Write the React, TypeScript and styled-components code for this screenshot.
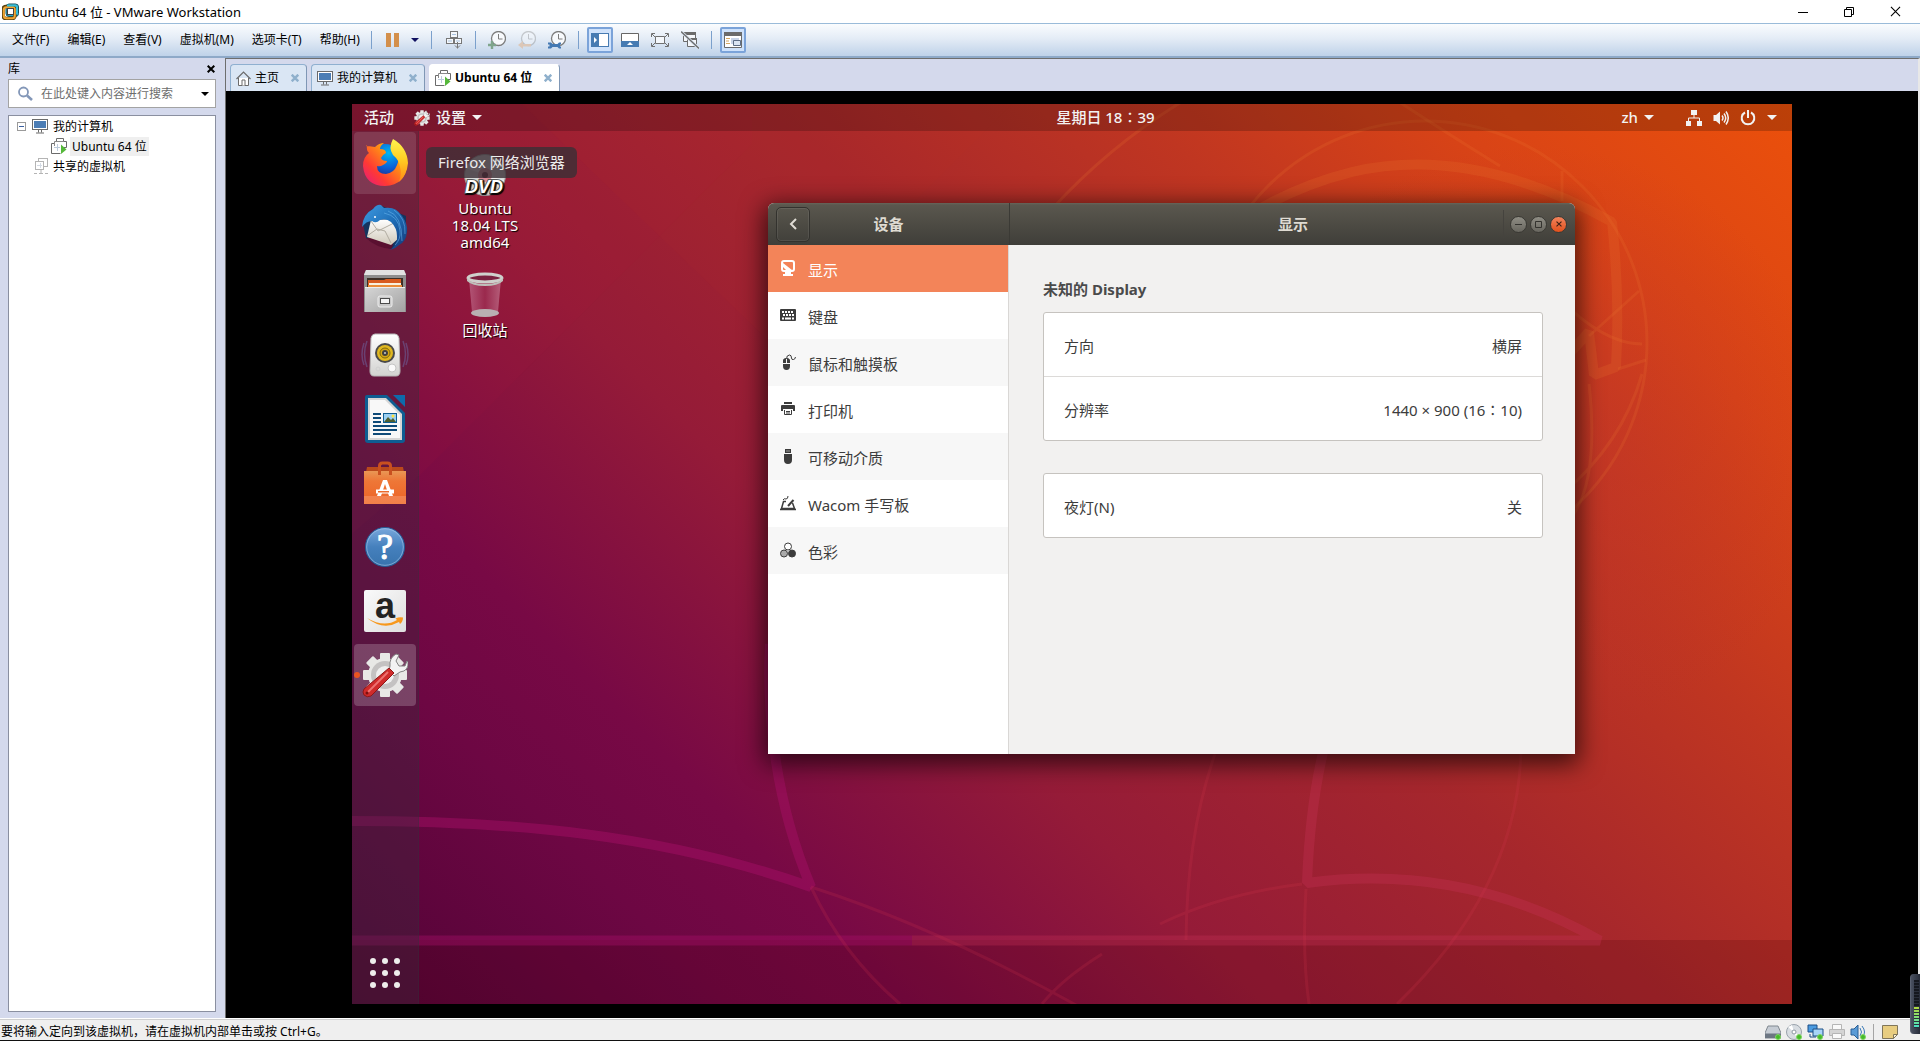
import React from 'react';
import styled, { createGlobalStyle, css } from 'styled-components';

const hostFont = '"Noto Sans", "Noto Sans CJK SC", sans-serif';
const guestFont = '"Noto Sans", "Noto Sans CJK SC", sans-serif';

const GlobalStyle = createGlobalStyle`
  *, *::before, *::after { box-sizing: border-box; }
  body { margin: 0; background: #000; }
  button, input { font: inherit; color: inherit; margin: 0; }
  button { padding: 0; border: 0; background: none; cursor: default; }
  h1, h2, h3, p { margin: 0; font-weight: inherit; font-size: inherit; }
  svg { display: block; flex: none; }
`;

/* ---------- Host application ---------- */

const Shell = styled.div`
  display: flex;
  flex-direction: column;
  height: 100vh;
  min-height: 640px;
  border-bottom: 1px solid #111;
  background: #d4d9ec;
  color: #000;
  font: 12px/16px ${hostFont};
`;

const TitleBar = styled.header`
  display: flex;
  align-items: center;
  flex: none;
  height: 23px;
  padding: 0 2px;
  gap: 3px;
  background: #fff;
`;

const AppTitle = styled.h1`
  flex: 1;
  font-size: 13px;
`;

const CaptionButtons = styled.div`
  display: flex;
`;

const CaptionButton = styled.button`
  display: grid;
  place-items: center;
  width: 46px;
  height: 20px;
`;

const MenuBar = styled.div`
  display: flex;
  align-items: center;
  flex: none;
  height: 35px;
  padding-left: 3px;
  border-top: 1px solid #9abbd9;
  border-bottom: 2px solid #8ea9c8;
  background: linear-gradient(#fafcfe, #e4ecf6 45%, #bfd2e9);
`;

const MenuItem = styled.button`
  padding: 0 9px;
  line-height: 20px;
`;

const ToolSeparator = styled.span<{ $lead?: number; $trail?: number }>`
  width: 1px;
  height: 18px;
  margin: 0 ${p => p.$trail ?? 6}px 0 ${p => p.$lead ?? 6}px;
  background: #7ba0cc;
`;

const ToolButton = styled.button<{ $active?: boolean }>`
  display: grid;
  place-items: center;
  width: 26px;
  height: 26px;
  margin: 0 2px;
  border: 2px solid ${p => (p.$active ? '#7ba3d9' : 'transparent')};
  border-radius: 2px;
  background: ${p => (p.$active ? '#cfe2fb' : 'transparent')};
`;

const NarrowTool = styled(ToolButton)`
  width: 14px;
  margin: 0;
`;

const Workspace = styled.div`
  display: flex;
  flex: 1;
  min-height: 0;
`;

const Library = styled.aside`
  display: flex;
  flex-direction: column;
  flex: none;
  width: 225px;
  padding: 0 9px 6px 8px;
`;

const LibraryHead = styled.div`
  display: flex;
  align-items: center;
  justify-content: space-between;
  height: 21px;
`;

const SmallButton = styled.button`
  display: grid;
  place-items: center;
  width: 10px;
  height: 16px;
`;

const SearchField = styled.div`
  display: flex;
  align-items: center;
  flex: none;
  height: 29px;
  padding: 0 5px 0 8px;
  border: 1px solid #a3a3a3;
  background: #fff;
`;

const SearchInput = styled.input`
  flex: 1;
  min-width: 0;
  padding: 0 0 0 8px;
  border: 0;
  outline: 0;
  background: none;
  &::placeholder { color: #6d6d6d; opacity: 1; }
`;

const Tree = styled.ul`
  flex: 1;
  margin: 7px 0 0;
  padding: 0;
  list-style: none;
  border: 1px solid #8a8fa0;
  background: #fff;
`;

const TreeRow = styled.li<{ $indent: number }>`
  display: flex;
  align-items: center;
  height: 20px;
  padding-left: ${p => p.$indent}px;
  gap: 3px;
`;

const TreeLabel = styled.button<{ $selected?: boolean }>`
  padding: 0 2px;
  line-height: 19px;
  background: ${p => (p.$selected ? '#efefef' : 'transparent')};
`;

const Expander = styled.button`
  display: grid;
  place-items: center;
  width: 9px;
  height: 9px;
  margin-right: 3px;
  border: 1px solid #9a9a9a;
  background: #fff;
`;

const Main = styled.main`
  display: flex;
  flex-direction: column;
  flex: 1;
  min-width: 0;
  border-left: 1px solid #6e6e6e;
  border-top: 1px solid #6e6e6e;
  border-right: 2px solid #e8e8e8;
`;

const Tabs = styled.div`
  display: flex;
  align-items: flex-end;
  flex: none;
  height: 32px;
  padding-left: 4px;
  gap: 4px;
`;

const Tab = styled.div<{ $active?: boolean }>`
  display: flex;
  align-items: center;
  height: 27px;
  padding: 0 6px 0 5px;
  gap: 11px;
  border: 1px solid ${p => (p.$active ? '#fff' : '#8fb0d0')};
  border-right-color: #7f97b5;
  border-bottom: 0;
  border-radius: 4px 4px 0 0;
  background: ${p => (p.$active ? '#fff' : '#dae6f4')};
  font-weight: ${p => (p.$active ? 700 : 400)};
`;

const TabLabel = styled.button`
  display: flex;
  align-items: center;
  gap: 4px;
`;

const Stage = styled.div`
  display: grid;
  place-items: center;
  flex: 1;
  min-height: 0;
  padding-bottom: 1px;
  overflow: hidden;
  background: #000;
`;

const StatusBar = styled.footer`
  position: relative;
  display: flex;
  align-items: center;
  flex: none;
  height: 22px;
  padding: 4px 22px 0 1px;
  border-top: 1px solid #fff;
  background: #efefef;
  box-shadow: inset 0 1px #cfcfcf;
`;

const StatusText = styled.p`
  flex: 1;
`;

const StatusIcons = styled.div`
  display: flex;
  align-items: center;
  gap: 5px;
`;

const StatusRule = styled.span`
  width: 1px;
  height: 16px;
  margin: 0 3px 0 2px;
  background: #a5a5a5;
`;

const Meter = styled.div`
  position: absolute;
  right: 0;
  bottom: 6px;
  display: flex;
  justify-content: flex-end;
  align-items: flex-end;
  width: 10px;
  height: 60px;
  padding: 0 1px 6px;
  border-radius: 4px 0 0 4px;
  border-left: 1px solid #596070;
  background: linear-gradient(90deg, #4a5161, #272c39);
`;

const MeterScale = styled.span`
  width: 5px;
  height: 48px;
  background:
    repeating-linear-gradient(transparent 0 2px, #2a2f3b 2px 3px),
    linear-gradient(#15181f 26px, #b5d83a 26px, #7ee07a 38px, #41e0d0);
`;

/* ---------- Guest desktop ---------- */

const Desktop = styled.section`
  position: relative;
  isolation: isolate;
  display: flex;
  flex-direction: column;
  width: 100%;
  max-width: 1440px;
  aspect-ratio: 16 / 10;
  overflow: hidden;
  color: #fff;
  font: 15px/17px ${guestFont};
`;

const WallpaperArt = styled.svg`
  position: absolute;
  inset: 0;
  z-index: -1;
  width: 100%;
  height: 100%;
`;

const Panel = styled.div`
  display: grid;
  grid-template-columns: 1fr auto 1fr;
  align-items: center;
  flex: none;
  height: 27px;
  padding: 0 15px 0 12px;
  background: rgba(0, 0, 0, 0.2);
  color: #f2f2f2;
  font-weight: 500;
`;

const PanelGroup = styled.div<{ $end?: boolean }>`
  display: flex;
  align-items: center;
  justify-content: ${p => (p.$end ? 'flex-end' : 'flex-start')};
  gap: ${p => (p.$end ? 32 : 20)}px;
`;

const PanelButton = styled.button<{ $gap?: number }>`
  display: flex;
  align-items: center;
  gap: ${p => p.$gap ?? 6}px;
`;

const Clock = styled.button`
  padding-left: 70px;
`;

const DesktopBody = styled.div`
  display: flex;
  flex: 1;
  min-height: 0;
`;

const Dock = styled.nav`
  display: flex;
  flex-direction: column;
  flex: none;
  width: 67px;
  padding: 1px 3px 0 2px;
  gap: 2px;
  border-right: 1px solid rgba(40, 60, 60, 0.25);
  background: rgba(60, 40, 60, 0.4);
`;

const DockItem = styled.button<{ $lit?: number; $last?: boolean }>`
  position: relative;
  display: grid;
  place-items: center;
  flex: none;
  width: 62px;
  height: 62px;
  border-radius: 4px;
  background: rgba(255, 255, 255, ${p => p.$lit ?? 0});
  ${p => p.$last && css`margin-top: auto;`}
`;

const RunningDot = styled.span`
  position: absolute;
  left: 0;
  top: 28px;
  width: 6px;
  height: 6px;
  border-radius: 50%;
  background: #e95420;
`;

const Canvas = styled.div`
  position: relative;
  flex: 1;
`;

const IconColumn = styled.ul`
  display: flex;
  flex-direction: column;
  align-items: center;
  width: 132px;
  margin: 0;
  padding: 23px 0 0;
  gap: 21px;
  list-style: none;
`;

const DesktopIcon = styled.button`
  display: flex;
  flex-direction: column;
  align-items: center;
  width: 72px;
  gap: 4px;
  text-shadow: 1px 1px 1px #000;
`;

const Tooltip = styled.div`
  position: absolute;
  left: 7px;
  top: 16px;
  padding: 7px 12px;
  border-radius: 6px;
  background: rgba(58, 48, 54, 0.8);
  color: #ececec;
`;

const Window = styled.div`
  position: absolute;
  left: 349px;
  top: 72px;
  display: grid;
  grid-template-columns: 241px 1fr;
  grid-template-rows: 42px 1fr;
  width: 807px;
  height: 551px;
  overflow: hidden;
  border-radius: 6px 6px 0 0;
  background: #f2f1f0;
  color: #3c3c3c;
`;

const WindowShadow = styled.div`
  position: absolute;
  left: 349px;
  top: 72px;
  width: 807px;
  height: 551px;
  border-radius: 6px 6px 0 0;
  box-shadow: 0 6px 24px 4px rgba(0, 0, 0, 0.65);
`;

const HeadBar = styled.header`
  display: grid;
  grid-template-columns: 64px 1fr 64px;
  align-items: center;
  padding: 0 8px;
  background: linear-gradient(#67645a, #5a574e 2px, #3f3e39);
  color: #dfdbd2;
  font-weight: 700;
  text-align: center;
  & + & {
    padding-left: 9px;
    border-left: 1px solid #3b3a35;
  }
`;

const BackButton = styled.button`
  display: grid;
  place-items: center;
  width: 34px;
  height: 35px;
  border: 1px solid #33322e;
  border-radius: 5px;
  box-shadow: inset 0 0 0 1px rgba(255, 255, 255, 0.08);
`;

const HeadTitle = styled.h2`
  grid-column: 2;
  font-weight: 700;
`;

const Controls = styled.div`
  display: flex;
  align-items: center;
  justify-content: flex-end;
  gap: 3px;
  height: 28px;
  border-left: 1px solid #45433e;
`;

const RoundButton = styled.button<{ $close?: boolean }>`
  display: grid;
  place-items: center;
  width: 17px;
  height: 17px;
  border: 1px solid #3a3934;
  border-radius: 50%;
  background: ${p => (p.$close ? 'linear-gradient(#f2835c, #e2501c)' : 'linear-gradient(#8f8d84, #68665f)')};
`;

const SideList = styled.nav`
  display: flex;
  flex-direction: column;
  border-right: 1px solid #d9d7d5;
  background: #fff;
`;

const SideItem = styled.button<{ $active?: boolean }>`
  display: flex;
  align-items: center;
  height: 47px;
  padding: 3px 12px 0;
  gap: 12px;
  background: #fff;
  &:nth-child(odd) { background: #f7f7f7; }
  ${p => p.$active && css`
    &&, &&:nth-child(odd) { background: #f38459; }
    color: #fff;
  `}
  svg { margin-bottom: 4px; }
`;

const Content = styled.div`
  display: flex;
  flex-direction: column;
  padding: 36px 32px 0 34px;
`;

const SectionTitle = styled.h3`
  margin-bottom: 14px;
  font-weight: 700;
  color: #4a4a4a;
`;

const Card = styled.div`
  margin-bottom: 32px;
  border: 1px solid #c6c3bf;
  border-radius: 3px;
  background: #fff;
`;

const CardRow = styled.button`
  display: flex;
  align-items: center;
  justify-content: space-between;
  width: 100%;
  height: 63px;
  padding: 3px 20px 0;
  & + & {
    height: 64px;
    border-top: 1px solid #dcdad8;
  }
`;

/* ---------- Host icons ---------- */

const VmwareLogo = () => (
  <svg width="17" height="17" viewBox="0 0 17 17">
    <rect x="4" y="1" width="12.500" height="12.500" rx="3" fill="#29a9c5" stroke="#17505c" />
    <rect x="1" y="3.500" width="12" height="12" rx="3" fill="none" stroke="#5b4310" strokeWidth="3.600" />
    <rect x="1.800" y="4.200" width="11" height="11" rx="2.500" fill="none" stroke="#f0a531" strokeWidth="2" />
    <path d="M5 2.500h8q2 0 2 2v7" fill="none" stroke="#37bdd8" strokeWidth="2" />
    <rect x="5.500" y="5.500" width="6" height="6" fill="#fff" stroke="#444" />
  </svg>
);

const Caret = ({ w = 8, color = '#000' }: { w?: number; color?: string }) => (
  <svg width={w} height={w / 2} viewBox="0 0 8 4"><path d="M0 0h8L4 4z" fill={color} /></svg>
);

const Cross = ({ size = 8, color = '#000', stroke = 2 }: { size?: number; color?: string; stroke?: number }) => (
  <svg width={size} height={size} viewBox="0 0 8 8"><path d="M.7.7l6.600 6.600M7.300.7L.7 7.300" stroke={color} strokeWidth={stroke} /></svg>
);

const MonitorIcon = () => (
  <svg width="16" height="16" viewBox="0 0 16 16">
    <rect x=".5" y="1.500" width="15" height="10" fill="#fff" stroke="#6b6b6b" />
    <rect x="2" y="3" width="12" height="7" fill="#4b7db5" />
    <path d="M6.500 12v2.500M9.500 12v2.500M4 15h8" stroke="#6b6b6b" />
  </svg>
);

const VmIcon = () => (
  <svg width="16" height="16" viewBox="0 0 16 16" fill="none">
    <path d="M5.500 4V.5h7v3h3v6H13" stroke="#6b6b6b" />
    <path d="M3.500 8V3.500h9" stroke="#8a8a8a" />
    <path d="M3 5.500H.5v10h9" stroke="#6b6b6b" />
    <path d="M3 9.500h6M6.500 6v7" stroke="#bccbdc" />
    <path d="M10 6.500l5.500 5-5.500 4.500z" fill="#55b83a" />
  </svg>
);

const SharedIcon = () => (
  <svg width="14" height="16" viewBox="0 0 14 16" fill="none" stroke="#b4b4b4">
    <rect x="4.500" y=".5" width="9" height="8" />
    <rect x="1.500" y="3.500" width="8" height="8" fill="#fff" />
    <path d="M3 7.500h5M6.500 5v5" stroke="#d3dae4" />
    <path d="M0 15.500h3M5 15.500h4M11 15.500h3M7 12v3" />
  </svg>
);

const HomeIcon = () => (
  <svg width="15" height="15" viewBox="0 0 15 15" fill="#fff" stroke="#6b6b6b">
    <path d="M2.500 7v7.500h10V7" />
    <path d="M.5 8l7-7 7 7" fill="none" strokeWidth="1.200" />
    <path d="M6 14.500V9h3v5.500" />
  </svg>
);

const SearchIcon = () => (
  <svg width="16" height="16" viewBox="0 0 16 16" fill="none" stroke="#8397b8">
    <circle cx="6.500" cy="6" r="4.500" strokeWidth="1.800" />
    <path d="M10 9.500l5 4.500" strokeWidth="2.600" />
  </svg>
);

const PauseIcon = () => (
  <svg width="14" height="14" viewBox="0 0 14 14" fill="#d38f4b"><path d="M0 0h5v14H0zM8 0h5v14H8z" /></svg>
);

const SendKeysIcon = () => (
  <svg width="18" height="18" viewBox="0 0 18 18" fill="#f5f8fc" stroke="#777">
    <rect x="5.500" y=".5" width="7" height="6" /><rect x="1.500" y="7.500" width="7" height="5" /><rect x="9.500" y="7.500" width="7" height="5" />
    <path d="M7 3.500h4M3 10h4M11 10h4" stroke="#a9c3e0" />
    <path d="M12.500 11v6.500M10 14.500l2.500 2.500 2.500-2.500" fill="none" />
  </svg>
);

const SnapshotIcon = ({ kind }: { kind: 'add' | 'back' | 'manage' }) => (
  <svg width="18" height="18" viewBox="0 0 18 18" fill="none">
    <g opacity={kind === 'back' ? 0.35 : 1}>
      <circle cx="10.500" cy="7.500" r="7" fill="#f7f9fc" stroke="#7d7d7d" strokeWidth="1.300" />
      <path d="M10.500 3v5h4" stroke="#7d7d7d" />
    </g>
    {kind === 'add' && <path d="M0 14h8M4 10v8" stroke="#7fa58c" strokeWidth="2.400" />}
    {kind === 'back' && <path d="M0 14l5-4v3h8v2.500H5V18z" fill="#dcc7b8" />}
    {kind === 'manage' && <path d="M0 11.500h3l1.500 1.500h5l1.500-1.500h2v2h-1v2h1v2h-2L9.500 16h-5L3 17.500H0v-2h1.500v-2H0z" fill="#4479b3" />}
  </svg>
);

const LibraryIcon = () => (
  <svg width="18" height="14" viewBox="0 0 18 14">
    <path d="M0 0h18v14H0z" fill="#477bb2" /><path d="M8 1h9v12H8z" fill="#fff" /><path d="M3 4v6l3-3z" fill="#fff" />
  </svg>
);
const ThumbIcon = () => (
  <svg width="18" height="14" viewBox="0 0 18 14">
    <path d="M.5.5h17v13H.5z" fill="#fff" stroke="#666" /><path d="M0 8h18v6H0z" fill="#477bb2" /><path d="M6 12h6l-3-3z" fill="#fff" />
  </svg>
);
const FullscreenIcon = () => (
  <svg width="18" height="14" viewBox="0 0 18 14" fill="none" stroke="#707070">
    <path d="M4.500 3.500h9v7h-9z" fill="#f4f7fb" />
    <path d="M.5 4V.5H4M14 .5h3.500V4M17.500 10v3.500H14M4 13.500H.5V10M1 1l3 3M17 1l-3 3M17 13l-3-3M1 13l3-3" />
  </svg>
);
const UnityIcon = () => (
  <svg width="18" height="18" viewBox="0 0 18 18" fill="none" stroke="#6b6b6b">
    <path d="M2.500 2.500h12v8h-12z" fill="#f5f7fa" /><path d="M2 2.500h13" strokeWidth="3" />
    <path d="M6.500 7.500h9v8h-9z" fill="#f5f7fa" /><path d="M6 8h10" strokeWidth="2" />
    <path d="M0 .5l18 17" stroke="#dce7f4" strokeWidth="3" /><path d="M0 .5l18 17" strokeWidth="1.300" />
  </svg>
);
const ConsoleIcon = () => (
  <svg width="18" height="16" viewBox="0 0 18 16">
    <path d="M.5.5h17v15H.5z" fill="#fff" stroke="#6b6b6b" /><path d="M0 0h18v4H0z" fill="#6b6b6b" />
    <path d="M2 6.500h4M2 9h3M2 11.500h4" stroke="#d9a860" /><path d="M7 6h8v6H7z" fill="#c8d4e8" />
    <path d="M9.500 8.500h7v5h-7z" fill="#dbe5f3" stroke="#5d6d85" />
  </svg>
);

const Led = () => <circle cx="13" cy="13" r="2.500" fill="#45b92a" stroke="#7fd562" />;

const DiskIcon = () => (
  <svg width="16" height="16" viewBox="0 0 16 16">
    <path d="M3 2h10l3 7v5H0V9z" fill="#c6ccd4" stroke="#808890" /><path d="M0 9.500h16V14H0z" fill="#6c7682" /><Led />
  </svg>
);
const DiscIcon = () => (
  <svg width="16" height="16" viewBox="0 0 16 16">
    <circle cx="8" cy="8" r="7.500" fill="#d8dde2" stroke="#9aa3ac" /><path d="M8 8L2 3l4-2zM8 8l6 4-3 3z" fill="#fff" /><circle cx="8" cy="8" r="2" fill="#fff" stroke="#8e98a4" /><Led />
  </svg>
);
const NetIcon = () => (
  <svg width="17" height="16" viewBox="0 0 17 16">
    <path d="M1 1h9v7H1z" fill="#4b9be0" stroke="#1d4f86" /><path d="M6 5h10v7H6z" fill="#a7d4f7" stroke="#1d4f86" /><path d="M3 10v3h6" stroke="#1d4f86" fill="none" /><Led />
  </svg>
);
const PrinterIcon = () => (
  <svg width="16" height="16" viewBox="0 0 16 16" stroke="#b5b5b5">
    <path d="M3.500.5h9v6h-9z" fill="#fafafa" /><path d="M.5 5.500h15v6H.5z" fill="#d4d4d4" /><path d="M3.500 9.500h9v5h-9z" fill="#fafafa" />
  </svg>
);
const SoundIcon = () => (
  <svg width="16" height="16" viewBox="0 0 16 16" fill="none">
    <path d="M1 5h3l4-4v14l-4-4H1z" fill="#5a9bd6" stroke="#2a5f95" /><path d="M10 4q3 4 0 8M12 2q5 6 0 12" stroke="#3b7ab6" /><Led />
  </svg>
);
const NoteIcon = () => (
  <svg width="16" height="14" viewBox="0 0 16 14"><path d="M.5.5h15v9l-4 4H.5z" fill="#e8cd80" stroke="#80765a" /><path d="M11.500 13.500v-4h4z" fill="#fff6d5" stroke="#80765a" /></svg>
);

/* ---------- Guest icons ---------- */

const Wallpaper = () => (
  <WallpaperArt viewBox="0 0 1440 900" preserveAspectRatio="xMidYMid slice" aria-hidden="true">
    <defs>
      <linearGradient id="sky" gradientUnits="userSpaceOnUse" x1="0" y1="900" x2="1170" y2="-270">
        <stop offset="0" stopColor="#510336" />
        <stop offset=".16" stopColor="#6d0743" />
        <stop offset=".24" stopColor="#780945" />
        <stop offset=".39" stopColor="#951b38" />
        <stop offset=".56" stopColor="#a6272c" />
        <stop offset=".72" stopColor="#c03621" />
        <stop offset=".85" stopColor="#d94416" />
        <stop offset="1" stopColor="#eb500b" />
      </linearGradient>
      <radialGradient id="glow" gradientUnits="userSpaceOnUse" cx="1180" cy="340" r="300">
        <stop offset="0" stopColor="#b83030" stopOpacity=".5" />
        <stop offset="1" stopColor="#b83030" stopOpacity="0" />
      </radialGradient>
    </defs>
    <path d="M0 0h1440v900H0z" fill="url(#sky)" />
    <path d="M0 0h1440v900H0z" fill="url(#glow)" />
    <path d="M0 430L67 372 400 40V0H0z" fill="#b01840" opacity=".08" />
    <path d="M170 0L420 240 660 0z" fill="#c03820" opacity=".08" />
    <path d="M0 836h1440v64H0z" fill="#400008" opacity=".18" />
    <g fill="none" stroke="#c83258" strokeOpacity=".32" strokeWidth="10" strokeLinejoin="bevel">
      <path d="M0 717C160 717 310 730 459 783C420 690 415 600 418 540" stroke="#a81068" strokeOpacity=".45" />
      <path d="M0 836.500H560" stroke="#a81068" strokeOpacity=".4" />
      <path d="M560 836.500H1248Q1110 758 955 779Q958 700 973 640" />
      <path d="M1180 290L1237 228l5 43 22-8Q1268 190 1260 118Q1120 40 1000 68Q910 90 830 160" stroke="#e8702c" strokeOpacity=".22" />
    </g>
    <g fill="none" stroke="#d83850" strokeOpacity=".18" strokeWidth="3">
      <path d="M459 783Q590 825 740 910M459 783Q490 850 548 900M1045 900Q1169 780 1169 640M863 650Q835 730 834 836M808 820Q870 790 950 780M954 785Q950 850 957 900M690 900q20-25 60-50" />
      <circle cx="1073" cy="239" r="222" stroke="#f07830" />
      <path d="M700 105Q800-5 950-60M1020-20Q1080 20 1148 62M1210 67v30M1177 160Q1240 240 1290 240M1237 232l50-45M1266 265l28-9M1237 280q10 90-15 130M1290 270Q1270 340 1210 390" stroke="#f07830" />
    </g>
  </WallpaperArt>
);

const FirefoxIcon = () => (
  <svg width="46" height="48" viewBox="0 0 46 48">
    <defs>
      <radialGradient id="ffb" cx=".6" cy=".25" r=".8"><stop offset="0" stopColor="#00b7f0" /><stop offset=".5" stopColor="#0a62d8" /><stop offset="1" stopColor="#2a1a70" /></radialGradient>
      <linearGradient id="ffo" x1="1" y1="0" x2="0" y2="1"><stop offset="0" stopColor="#fff04a" /><stop offset=".35" stopColor="#ff9a12" /><stop offset=".7" stopColor="#ff3a33" /><stop offset="1" stopColor="#e31587" /></linearGradient>
      <linearGradient id="ffy" x1="0" y1="0" x2="0" y2="1"><stop offset="0" stopColor="#fff44f" /><stop offset=".5" stopColor="#ffcb22" /><stop offset="1" stopColor="#ff8a16" /></linearGradient>
    </defs>
    <circle cx="23" cy="23" r="18" fill="url(#ffb)" />
    <path d="M5 6q-1 5 2 8Q1 18 1 27q2 20 22 20 21-1 22-22Q45 9 31 1q-2 7 3 13 4 6 1 12-3 8-11 9-9 0-9-8 3 1 6-1 4-2 4-4-5 0-6-3 1-3 5-5 0-4-6-4 0-3 4-6-5 0-9 4-6-1-9-1z" fill="url(#ffo)" />
    <path d="M31 0q14 8 15 24-1 12-9 19 3-8 1-15-1-7-7-12-5-7 0-16z" fill="url(#ffy)" />
  </svg>
);

const ThunderbirdIcon = () => (
  <svg width="46" height="46" viewBox="0 0 46 46">
    <defs>
      <linearGradient id="tb" x1="0" y1="0" x2="1" y2="1"><stop offset="0" stopColor="#3f9be2" /><stop offset=".5" stopColor="#1f6fb8" /><stop offset="1" stopColor="#123474" /></linearGradient>
      <linearGradient id="env" x1="0" y1="0" x2="0" y2="1"><stop offset="0" stopColor="#fff" /><stop offset="1" stopColor="#d0c9ba" /></linearGradient>
    </defs>
    <path d="M1 20Q4 4 20 2L44 12V30L30 45Q14 42 4 34z" fill="#14345f" />
    <path d="M4 34Q14 44 30 45L32 34z" fill="#5a1030" />
    <path d="M9 16L34 15 37 34 29 41 5 33z" fill="url(#env)" />
    <path d="M9 17l7 10 18-9M5 32l10-7 8 2 6 12" fill="none" stroke="#b2ada2" />
    <path d="M0 23Q1 10 11 5 15 0 19 1l3 3Q34 2 40 12q6 8 5 16-1 10-8 13-4 4-9 5 8-6 7-14 0-8-6-14-5-4-11-2-4 4-8 1-6 0-10 6z" fill="url(#tb)" />
    <path d="M26 7q14 4 14 30M32 6q12 8 11 24M22 9q15 3 16 18M38 27q1 8-5 14" fill="none" stroke="#69b6ee" strokeOpacity=".55" />
    <circle cx="13" cy="13" r="1" fill="#fff" />
  </svg>
);

const FilesIcon = () => (
  <svg width="44" height="44" viewBox="0 0 44 44">
    <defs><linearGradient id="fl" x1="0" y1="0" x2="1" y2="1"><stop offset="0" stopColor="#d5d5d5" /><stop offset="1" stopColor="#a2a2a2" /></linearGradient></defs>
    <path d="M3 1h38l2 4v38H1V5z" fill="#8e8e8e" /><path d="M3 1h38l2 5H1z" fill="#e2e2e2" />
    <path d="M4 9h36v10H4z" fill="#3c3028" /><path d="M5 11h16l2-1h15v9H5z" fill="#d85b1f" /><path d="M6 14h32v4H6z" fill="#f8efdc" /><path d="M5 16h34v3H5z" fill="#eb8d38" />
    <path d="M2 19h40v24H2z" fill="url(#fl)" /><path d="M2 18.500h40" stroke="#eee" />
    <rect x="15" y="27" width="14" height="11" rx="2" fill="#c9c9c9" stroke="#eee" /><rect x="17.500" y="29.500" width="9" height="5" fill="#f5f5f5" stroke="#4b4b4b" />
  </svg>
);

const MusicIcon = () => (
  <svg width="48" height="44" viewBox="0 0 48 44">
    <defs><linearGradient id="sp" x1="0" y1="0" x2="0" y2="1"><stop offset="0" stopColor="#fff" /><stop offset="1" stopColor="#d2d2d0" /></linearGradient></defs>
    <path d="M6 8q-5 13 0 26M3 10q-4 12 0 22M42 8q5 13 0 26M45 10q4 12 0 22" fill="none" stroke="#6e70b0" strokeOpacity=".45" strokeWidth="1.500" />
    <path d="M14 1h20q3 0 4 4l1 33q0 5-4 5H13q-4 0-4-5l1-33q1-4 4-4z" fill="url(#sp)" stroke="#b8b8b8" />
    <circle cx="24" cy="20" r="10" fill="#4a4a4a" /><circle cx="24" cy="20" r="8" fill="#e0b820" /><circle cx="24" cy="20" r="5" fill="#d6a714" stroke="#806a10" /><circle cx="24" cy="20" r="3" fill="#404040" /><circle cx="24" cy="20" r="1" fill="#ccc" />
    <circle cx="31" cy="35" r="4" fill="#fafafa" stroke="#c5c5c5" /><circle cx="17" cy="36" r="2" fill="none" stroke="#d0d0d0" />
  </svg>
);

const WriterIcon = () => (
  <svg width="40" height="48" viewBox="0 0 40 48">
    <path d="M2 0h20l18 18v27q0 3-3 3H3q-3 0-3-3V2q0-2 2-2z" fill="#0e5d92" /><path d="M28 0h12v12z" fill="#0e6bab" />
    <path d="M3 3h18l16 16v26H3z" fill="#d6d6d6" /><path d="M5 5h15l15 15v23H5z" fill="#f8f8f8" />
    <path d="M8 19h8M8 23h8M8 27h8M8 31h24M8 35h24M8 39h18" stroke="#0e4a78" strokeWidth="2" />
    <path d="M18 18h14v10H18z" fill="#0e5d92" /><path d="M19 19h12v8H19z" fill="#9bd0f2" /><path d="M19 27l4-5 3 3 2-2 3 4z" fill="#4d5e30" /><circle cx="28" cy="21" r="1.500" fill="#ffe23c" />
  </svg>
);

const SoftwareIcon = () => (
  <svg width="42" height="44" viewBox="0 0 42 44">
    <defs><linearGradient id="bag" x1="0" y1="0" x2="0" y2="1"><stop offset="0" stopColor="#e99755" /><stop offset=".3" stopColor="#ee7737" /><stop offset=".75" stopColor="#ed6a2c" /><stop offset=".76" stopColor="#f28350" /><stop offset="1" stopColor="#f18048" /></linearGradient></defs>
    <path d="M3 6h36l1 5H2z" fill="#b9491c" /><path d="M0 10h42v33H0z" fill="url(#bag)" />
    <path d="M15.500 14V5q0-3 3-3h5q3 0 3 3v9" fill="none" stroke="#c9501f" strokeWidth="3" />
    <path d="M13 35l6-16h4l6 16h-4l-4-12-4 12z" fill="#fff" /><path d="M12 28.500h18v4H12z" fill="#fff" /><path d="M14 30h11v1.500H14z" fill="#ec6b2c" />
  </svg>
);

const HelpIcon = () => (
  <svg width="42" height="42" viewBox="0 0 42 42">
    <defs><linearGradient id="hp" x1="0" y1="0" x2="0" y2="1"><stop offset="0" stopColor="#79a8dc" /><stop offset=".5" stopColor="#4580bd" /><stop offset="1" stopColor="#3873ad" /></linearGradient></defs>
    <circle cx="21" cy="21" r="19.500" fill="url(#hp)" stroke="#245b96" />
    <circle cx="21" cy="21" r="18.300" fill="none" stroke="#a6c7e9" strokeOpacity=".6" />
    <text x="21" y="33" textAnchor="middle" fontFamily="Liberation Serif, serif" fontSize="36" fill="#fff" stroke="#fff">?</text>
  </svg>
);

const AmazonIcon = () => (
  <svg width="42" height="42" viewBox="0 0 42 42" overflow="visible">
    <defs><linearGradient id="am" x1="0" y1="0" x2="1" y2="1"><stop offset="0" stopColor="#fafafa" /><stop offset="1" stopColor="#dedede" /></linearGradient></defs>
    <rect width="42" height="42" rx="2" fill="url(#am)" />
    <text x="21" y="28" textAnchor="middle" fontFamily="Liberation Sans, sans-serif" fontWeight="700" fontSize="36" fill="#222">a</text>
    <path d="M3 28q17 10 30 2l-1.500-1.500q4-2 7.500-1 0 4-3 6.500l-1-2q-16 9-32-4z" fill="#f7981d" />
  </svg>
);

const GearTool = ({ size = 46 }: { size?: number }) => (
  <svg width={size} height={size} viewBox="0 0 46 46">
    <g fill="#e8e8e6">
      {[0, 45, 90, 135].map(a => (
        <rect key={a} x="18" y="1" width="10" height="44" rx="1" transform={`rotate(${a} 23 23)`} />
      ))}
      <circle cx="23" cy="23" r="17" />
    </g>
    <circle cx="23" cy="23" r="14" fill="#c4c2c2" /><circle cx="23" cy="23" r="9" fill="#efefef" />
    <path d="M28 14q-1-8 6-12l3 1-3 6 3 5 6 0 2-5 1 1q1 9-8 10l-6 4-5-5z" fill="#f3f3f3" stroke="#828282" />
    <path d="M27 16l5 5L9 44q-4 2-7-1-2-3 0-6z" fill="#cf2b2b" stroke="#8e1717" /><path d="M26 20L6 40" stroke="#ec7270" strokeWidth="2" />
    <circle cx="5" cy="41" r="1.500" fill="#7c1010" />
  </svg>
);

const GridIcon = () => (
  <svg width="30" height="30" viewBox="0 0 30 30" fill="#eeeeec">
    {[3, 15, 27].map(y => [3, 15, 27].map(x => <circle key={`${x}-${y}`} cx={x} cy={y} r="3" />))}
  </svg>
);

const DvdIcon = () => (
  <svg width="42" height="42" viewBox="0 0 42 42" overflow="visible">
    <circle cx="21" cy="21" r="20.500" fill="#d5d8d6" stroke="#999" /><path d="M21 21L2 14l5-8zM21 21l19 5-4 9z" fill="#fff" opacity=".6" />
    <circle cx="21" cy="21" r="7" fill="#d98b95" /><circle cx="21" cy="21" r="3" fill="#5a1026" />
    <text x="20" y="39" textAnchor="middle" fontFamily="Liberation Sans, sans-serif" fontWeight="700" fontStyle="italic" fontSize="18" fill="#fff" stroke="#555" strokeWidth="2" paintOrder="stroke">DVD</text>
  </svg>
);

const TrashIcon = () => (
  <svg width="38" height="46" viewBox="0 0 38 46">
    <defs><linearGradient id="tr"><stop offset="0" stopColor="#b86080" /><stop offset=".5" stopColor="#9c2c50" /><stop offset="1" stopColor="#bb6a85" /></linearGradient></defs>
    <path d="M3 7l3 33q13 9 26 0l3-33z" fill="url(#tr)" opacity=".85" />
    <ellipse cx="19" cy="41" rx="14" ry="4" fill="#b9b0b2" />
    <ellipse cx="19" cy="6" rx="17" ry="4" fill="#7a2140" stroke="#cfd0cc" strokeWidth="3" />
    <path d="M1 6q4 6 18 6t18-6v3q-5 5-18 5T1 9z" fill="#bfc0bb" />
  </svg>
);

const LanIcon = () => (
  <svg width="16" height="16" viewBox="0 0 16 16" fill="#f2f2f2"><path d="M5 0h6v5H5zM0 11h5v5H0zM11 11h5v5h-5z" /><path d="M8 5v3M2.500 11V8h11v3" fill="none" stroke="#f2f2f2" /></svg>
);
const VolumeIcon = () => (
  <svg width="16" height="16" viewBox="0 0 16 16" fill="none" stroke="#f2f2f2" strokeWidth="1.500"><path d="M.5 5H3l4-3.500v13L3 11H.5z" fill="#f2f2f2" stroke="none" /><path d="M9 5.500q2 2.500 0 5M11 3.500q3.500 4.500 0 9M13 1.500q4.500 6.500 0 13" /></svg>
);
const PowerIcon = () => (
  <svg width="16" height="16" viewBox="0 0 16 16" fill="none" stroke="#f2f2f2" strokeWidth="2"><path d="M5 2.500a6.300 6.300 0 1 0 6 0M8 0v8" /></svg>
);

const sideIcons: Record<string, React.ReactNode> = {
  display: (
    <svg width="16" height="16" viewBox="0 0 16 16" fill="none" stroke="currentColor">
      <rect x="2" y="1" width="12" height="10" rx="2" strokeWidth="2" /><path d="M3 3l9 7H6L3 7z" fill="currentColor" stroke="none" /><path d="M5 3.500l3 0 4 3v2z" fill="#f38459" stroke="none" /><path d="M3 15h10M5 13h6" strokeWidth="2" />
    </svg>
  ),
  keyboard: (
    <svg width="16" height="16" viewBox="0 0 16 16"><rect y="2" width="16" height="12" rx="1" fill="currentColor" /><path d="M2 5h12M3 8h11" stroke="#fff" strokeWidth="2" strokeDasharray="2 1" /><path d="M2 11.500h2M5 11.500h6M12 11.500h2" stroke="#fff" strokeWidth="2" /></svg>
  ),
  mouse: (
    <svg width="16" height="16" viewBox="0 0 16 16" fill="currentColor"><path d="M3 9V6.500Q3 4.500 6 4v5zM7 4q3 .5 3 2.500V9H7zM3 10h7v2q0 4-3.500 4T3 12z" /><path d="M6.500 5q0-4 3-4 2 0 2 3 0 2 2 1.500 1.500 0 2-2.500" fill="none" stroke="currentColor" /></svg>
  ),
  printer: (
    <svg width="16" height="16" viewBox="0 0 16 16" fill="currentColor"><path d="M4 1h8v2H4zM2 4h12q1 0 1 1v5h-2V8H3v2H1V5q0-1 1-1z" /><path d="M4.500 9v4.500h7V9" fill="#fff" stroke="currentColor" /><path d="M6 10.500h4M6 12h4" stroke="currentColor" /></svg>
  ),
  usb: (
    <svg width="16" height="16" viewBox="0 0 16 16"><path d="M5 1h6v4H5zM4 6h8v6q0 4-4 4t-4-4z" fill="currentColor" /><path d="M6.500 3h1M8.500 3h1" stroke="#fff" /></svg>
  ),
  tablet: (
    <svg width="16" height="16" viewBox="0 0 16 16" fill="none" stroke="currentColor"><path d="M6 6.500H3.500L1.500 13.500h13L12.500 8" strokeWidth="1.500" /><path d="M0 14.500h16" strokeWidth="1.500" /><path d="M13.500 5L8 11" strokeWidth="2" /><path d="M3 5q1-2 3-1 2 0 2-3" /></svg>
  ),
  color: (
    <svg width="16" height="16" viewBox="0 0 16 16" stroke="currentColor"><circle cx="8" cy="4.500" r="3.500" fill="#fff" /><circle cx="4" cy="11.500" r="3.500" fill="#aaa" /><circle cx="12" cy="11.500" r="3.500" fill="currentColor" /></svg>
  ),
};

/* ---------- Data ---------- */

const menus = ['文件(F)', '编辑(E)', '查看(V)', '虚拟机(M)', '选项卡(T)', '帮助(H)'];

const tabs = [
  { label: '主页', icon: <HomeIcon /> },
  { label: '我的计算机', icon: <MonitorIcon /> },
  { label: 'Ubuntu 64 位', icon: <VmIcon />, active: true },
];

const dockApps = [
  { name: 'Firefox', icon: <FirefoxIcon />, lit: 0.12 },
  { name: 'Thunderbird', icon: <ThunderbirdIcon /> },
  { name: 'Files', icon: <FilesIcon /> },
  { name: 'Rhythmbox', icon: <MusicIcon /> },
  { name: 'LibreOffice Writer', icon: <WriterIcon /> },
  { name: 'Ubuntu Software', icon: <SoftwareIcon /> },
  { name: 'Help', icon: <HelpIcon /> },
  { name: 'Amazon', icon: <AmazonIcon /> },
  { name: 'Settings', icon: <GearTool />, lit: 0.2, running: true },
];

const panels = [
  { id: 'display', label: '显示', active: true },
  { id: 'keyboard', label: '键盘' },
  { id: 'mouse', label: '鼠标和触摸板' },
  { id: 'printer', label: '打印机' },
  { id: 'usb', label: '可移动介质' },
  { id: 'tablet', label: 'Wacom 手写板' },
  { id: 'color', label: '色彩' },
];

/* ---------- Composition ---------- */

const Toolbar = () => (
  <MenuBar>
    {menus.map(m => <MenuItem key={m}>{m}</MenuItem>)}
    <ToolSeparator $lead={2} $trail={6} />
    <ToolButton aria-label="Pause"><PauseIcon /></ToolButton>
    <NarrowTool aria-label="Power options"><Caret w={8} color="#101060" /></NarrowTool>
    <ToolSeparator $lead={9} $trail={7} />
    <ToolButton aria-label="Send Ctrl+Alt+Del"><SendKeysIcon /></ToolButton>
    <ToolSeparator />
    <ToolButton aria-label="Take snapshot"><SnapshotIcon kind="add" /></ToolButton>
    <ToolButton aria-label="Revert snapshot"><SnapshotIcon kind="back" /></ToolButton>
    <ToolButton aria-label="Manage snapshots"><SnapshotIcon kind="manage" /></ToolButton>
    <ToolSeparator />
    <ToolButton $active aria-label="Library"><LibraryIcon /></ToolButton>
    <ToolButton aria-label="Thumbnail bar"><ThumbIcon /></ToolButton>
    <ToolButton aria-label="Full screen"><FullscreenIcon /></ToolButton>
    <ToolButton aria-label="Unity"><UnityIcon /></ToolButton>
    <ToolSeparator />
    <ToolButton $active aria-label="Console view"><ConsoleIcon /></ToolButton>
  </MenuBar>
);

const LibraryPane = () => (
  <Library>
    <LibraryHead>
      <h2>库</h2>
      <SmallButton aria-label="Close library"><Cross /></SmallButton>
    </LibraryHead>
    <SearchField>
      <SearchIcon />
      <SearchInput aria-label="Search" placeholder="在此处键入内容进行搜索" />
      <SmallButton aria-label="Search options"><Caret /></SmallButton>
    </SearchField>
    <Tree>
      <TreeRow $indent={8}>
        <Expander aria-label="Collapse"><svg width="5" height="1"><path d="M0 .5h5" stroke="#3a5fa0" /></svg></Expander>
        <MonitorIcon />
        <TreeLabel>我的计算机</TreeLabel>
      </TreeRow>
      <TreeRow $indent={42}>
        <VmIcon />
        <TreeLabel $selected>Ubuntu 64 位</TreeLabel>
      </TreeRow>
      <TreeRow $indent={25}>
        <SharedIcon />
        <TreeLabel>共享的虚拟机</TreeLabel>
      </TreeRow>
    </Tree>
  </Library>
);

const SettingsWindow = () => (
  <>
    <WindowShadow />
    <Window>
      <HeadBar>
        <BackButton aria-label="Back">
          <svg width="8" height="12" viewBox="0 0 8 12"><path d="M7 1L2 6l5 5" fill="none" stroke="#e0dcd4" strokeWidth="2" /></svg>
        </BackButton>
        <HeadTitle>设备</HeadTitle>
      </HeadBar>
      <HeadBar>
        <HeadTitle>显示</HeadTitle>
        <Controls>
          <RoundButton aria-label="Minimize"><svg width="7" height="1"><path d="M0 .5h7" stroke="#34332f" /></svg></RoundButton>
          <RoundButton aria-label="Maximize"><svg width="7" height="7"><path d="M.5.5h6v6h-6z" fill="none" stroke="#34332f" /></svg></RoundButton>
          <RoundButton $close aria-label="Close"><Cross size={6} color="#3b2015" stroke={1.500} /></RoundButton>
        </Controls>
      </HeadBar>
      <SideList>
        {panels.map(p => (
          <SideItem key={p.id} $active={p.active}>{sideIcons[p.id]}{p.label}</SideItem>
        ))}
      </SideList>
      <Content>
        <SectionTitle>未知的 Display</SectionTitle>
        <Card>
          <CardRow><span>方向</span><span>横屏</span></CardRow>
          <CardRow><span>分辨率</span><span>1440 × 900 (16∶10)</span></CardRow>
        </Card>
        <Card>
          <CardRow><span>夜灯(N)</span><span>关</span></CardRow>
        </Card>
      </Content>
    </Window>
  </>
);

const GuestDesktop = () => (
  <Desktop>
    <Wallpaper />
    <Panel>
      <PanelGroup>
        <PanelButton>活动</PanelButton>
        <PanelButton><GearTool size={16} />设置<Caret w={10} color="#f2f2f2" /></PanelButton>
      </PanelGroup>
      <Clock>星期日 18∶39</Clock>
      <PanelGroup $end>
        <PanelButton>zh<Caret w={10} color="#f2f2f2" /></PanelButton>
        <PanelButton $gap={11} aria-label="System menu">
          <LanIcon /><VolumeIcon /><PowerIcon /><Caret w={10} color="#f2f2f2" />
        </PanelButton>
      </PanelGroup>
    </Panel>
    <DesktopBody>
      <Dock>
        {dockApps.map(a => (
          <DockItem key={a.name} aria-label={a.name} $lit={a.lit}>
            {a.running && <RunningDot />}
            {a.icon}
          </DockItem>
        ))}
        <DockItem $last aria-label="Show applications"><GridIcon /></DockItem>
      </Dock>
      <Canvas>
        <IconColumn>
          <li><DesktopIcon><DvdIcon />Ubuntu 18.04 LTS amd64</DesktopIcon></li>
          <li><DesktopIcon><TrashIcon />回收站</DesktopIcon></li>
        </IconColumn>
        <Tooltip role="tooltip">Firefox 网络浏览器</Tooltip>
        <SettingsWindow />
      </Canvas>
    </DesktopBody>
  </Desktop>
);

export default function App() {
  return (
    <Shell>
      <GlobalStyle />
      <TitleBar>
        <VmwareLogo />
        <AppTitle>Ubuntu 64 位 - VMware Workstation</AppTitle>
        <CaptionButtons>
          <CaptionButton aria-label="Minimize"><svg width="10" height="10"><path d="M0 5.500h10" stroke="#000" /></svg></CaptionButton>
          <CaptionButton aria-label="Restore"><svg width="10" height="10" fill="none" stroke="#000"><path d="M.5 2.500h7v7h-7zM2.500 2.500v-2h7v7h-2" /></svg></CaptionButton>
          <CaptionButton aria-label="Close"><Cross size={11} stroke={0.800} /></CaptionButton>
        </CaptionButtons>
      </TitleBar>
      <Toolbar />
      <Workspace>
        <LibraryPane />
        <Main>
          <Tabs>
            {tabs.map(t => (
              <Tab key={t.label} $active={t.active}>
                <TabLabel>{t.icon}{t.label}</TabLabel>
                <SmallButton aria-label={`Close ${t.label}`}><Cross color="#8fb0cc" stroke={2.500} /></SmallButton>
              </Tab>
            ))}
          </Tabs>
          <Stage><GuestDesktop /></Stage>
        </Main>
      </Workspace>
      <StatusBar>
        <StatusText>要将输入定向到该虚拟机，请在虚拟机内部单击或按 Ctrl+G。</StatusText>
        <StatusIcons>
          <DiskIcon /><DiscIcon /><NetIcon /><PrinterIcon /><SoundIcon />
          <StatusRule />
          <NoteIcon />
        </StatusIcons>
        <Meter><MeterScale /></Meter>
      </StatusBar>
    </Shell>
  );
}
